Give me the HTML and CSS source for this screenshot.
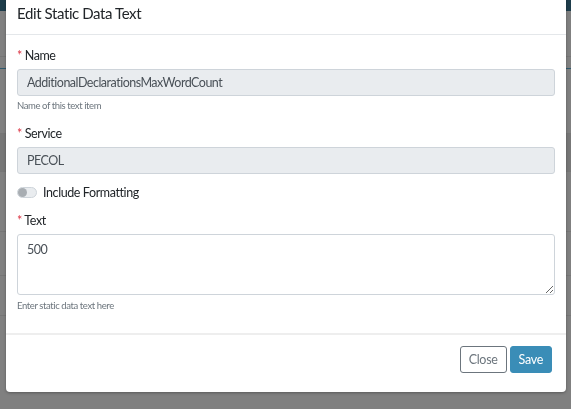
FILE: index.html
```html
<!DOCTYPE html>
<html>
<head>
    <meta charset="UTF-8">
    <meta name="viewport" content="width=device-width, initial-scale=1.0">
    <link rel="stylesheet" href="styles.css">
</head>
<body>
    <div class="page">
        <div class="topbar"></div>
        <div class="rows">
            <div class="row r1"></div>
            <div class="row r2"></div>
            <div class="row r3"></div>
            <div class="row r4 shaded"></div>
            <div class="row r5"></div>
            <div class="row r6"></div>
            <div class="row r7"></div>
        </div>
    </div>

    <div class="backdrop">
        <div class="modal">
            <div class="modal-header">
                <h4 class="modal-title">Edit Static Data Text</h4>
            </div>
            <form class="modal-body">
                <div class="form-group">
                    <label for="name"><span class="req">*</span> Name</label>
                    <input type="text" id="name" value="AdditionalDeclarationsMaxWordCount" readonly>
                    <small class="help">Name of this text item</small>
                </div>
                <div class="form-group">
                    <label for="service"><span class="req">*</span> Service</label>
                    <input type="text" id="service" value="PECOL" readonly>
                </div>
                <div class="switch-row">
                    <span class="switch"><span class="knob"></span></span>
                    <span class="switch-label">Include Formatting</span>
                </div>
                <div class="form-group">
                    <label for="text"><span class="req">*</span> Text</label>
                    <textarea id="text" rows="3">500</textarea>
                    <small class="help">Enter static data text here</small>
                </div>
            </form>
            <div class="modal-footer">
                <button type="button" class="btn btn-close">Close</button>
                <button type="button" class="btn btn-save">Save</button>
            </div>
        </div>
    </div>
</body>
</html>
```

FILE: styles.css
```css
* {
    box-sizing: border-box;
}

body {
    margin: 0;
    font-family: Lato, "Noto Sans", sans-serif;
    letter-spacing: -0.4px;
    background-color: #808080;
    overflow: hidden;
}

/* page behind the dialog, already dimmed */
.page {
    height: 409px;
}

.topbar {
    height: 11px;
    background-color: #1e3d4b;
}

.row {
    border-bottom: 1px solid #767676;
}

.r1 { height: 46px; }
.r2 { height: 12px; border-bottom-color: #2f5a6e; }
.r3 { height: 65px; }
.r4 { height: 38px; }
.r5 { height: 60px; }
.r6 { height: 44px; }
.r7 { height: 40px; }

.shaded {
    background-color: #777777;
}

.backdrop {
    position: fixed;
    top: 0;
    left: 0;
    right: 0;
    bottom: 0;
}

.modal {
    width: 560px;
    margin: -8px 0 0 6px;
    background-color: #fff;
    border-radius: 4px;
    box-shadow: 0 1px 3px rgba(0, 0, 0, 0.3);
}

.modal-header {
    padding: 10px 11px 9px;
    border-bottom: 1px solid #e4e7ea;
}

.modal-title {
    margin: 0;
    font-size: 15px;
    font-weight: normal;
    line-height: 23px;
    color: #212529;
}

.modal-body {
    padding: 13px 11px 7px;
}

.form-group {
    margin-bottom: 14px;
}

label {
    display: block;
    font-size: 12.5px;
    line-height: 16px;
    color: #212529;
    margin-bottom: 5px;
}

.req {
    color: #dc3545;
}

input[type="text"],
textarea {
    display: block;
    width: 100%;
    font-family: inherit;
    font-size: 12.5px;
    letter-spacing: -0.5px;
    color: #495057;
    border: 1px solid #ced4da;
    border-radius: 3px;
    padding: 4px 9px;
}

input[type="text"] {
    height: 27px;
    background-color: #e9ecef;
}

textarea {
    height: 61px;
    padding-top: 7px;
    line-height: 16px;
    background-color: #fff;
    resize: vertical;
}

.help {
    display: block;
    font-size: 9.5px;
    line-height: 12px;
    color: #6c757d;
    margin-top: 4px;
}

.form-group:last-child .help {
    margin-top: 5px;
}

.switch-row {
    display: flex;
    align-items: center;
    gap: 6px;
    margin: -3px 0 13px;
}

.switch {
    display: block;
    width: 20px;
    height: 11px;
    border: 1px solid #ced4da;
    border-radius: 6px;
    background-color: #e9ecef;
    padding: 1px;
}

.knob {
    display: block;
    width: 9px;
    height: 9px;
    margin: -1px;
    border-radius: 50%;
    background-color: #a8adb2;
}

.switch-label {
    font-size: 12.5px;
    color: #212529;
}

.modal-footer {
    display: flex;
    justify-content: flex-end;
    gap: 3px;
    padding: 11px 14px 19px;
    border-top: 2px solid #eeeeee;
}

.btn {
    font-family: inherit;
    font-size: 12.5px;
    letter-spacing: -0.3px;
    height: 27px;
    padding: 0 8px;
    border-radius: 3px;
    cursor: pointer;
}

.btn-close {
    background-color: #fff;
    color: #6c757d;
    border: 1px solid #6c757d;
}

.btn-save {
    background-color: #3a8db7;
    color: #fff;
    border: 1px solid #3a8db7;
}
```
